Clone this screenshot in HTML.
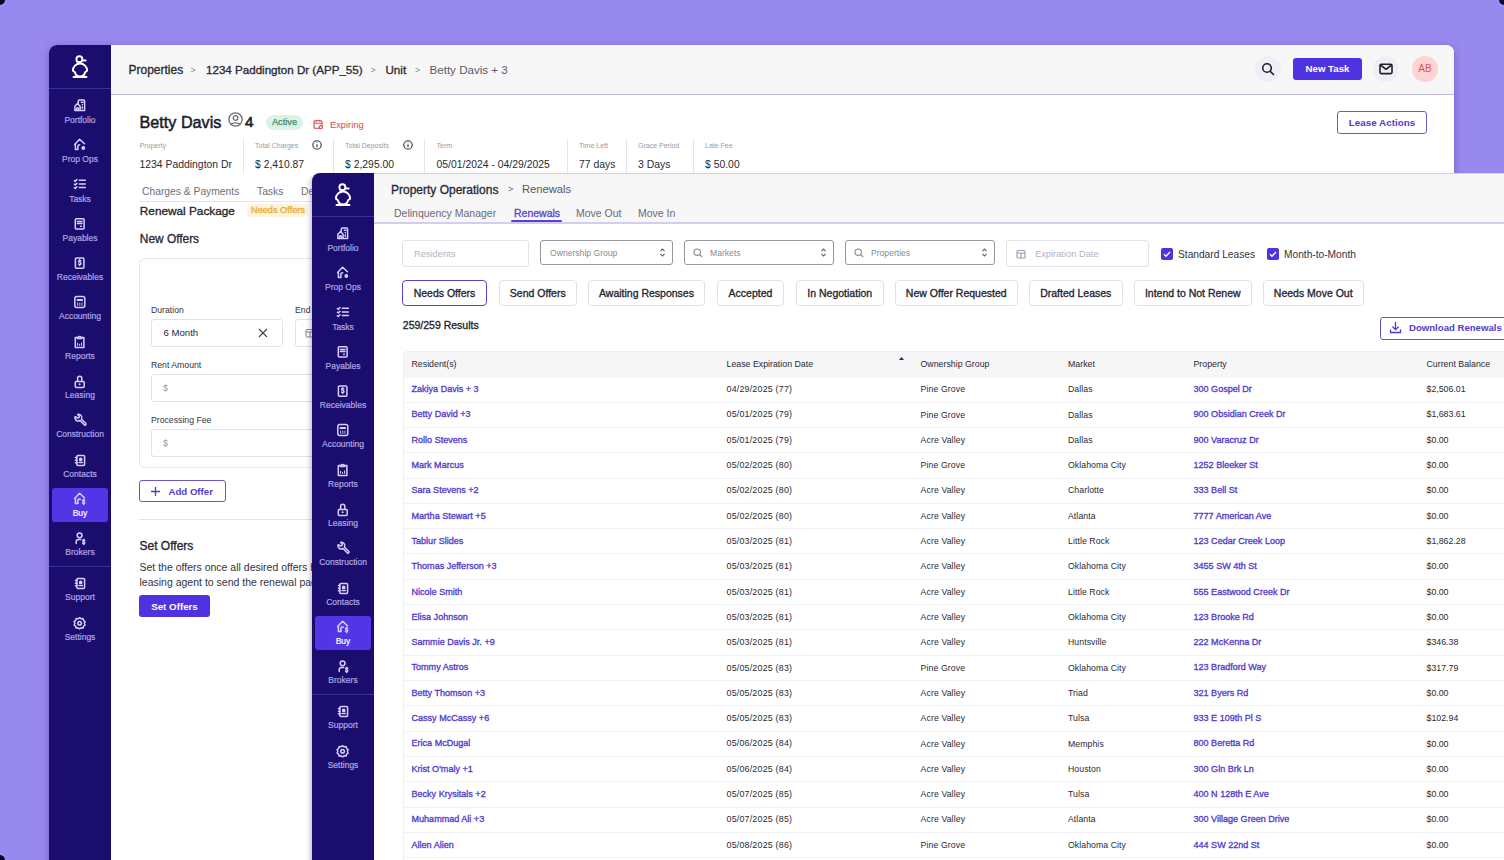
<!DOCTYPE html><html><head><meta charset="utf-8"><style>
*{box-sizing:border-box;margin:0;padding:0}
html,body{width:1504px;height:860px;overflow:hidden}
body{background:#9889ef;font-family:"Liberation Sans",sans-serif;position:relative}
.t{position:absolute;white-space:nowrap;line-height:1.2}
.sl{position:absolute;width:62px;text-align:center;font-size:8.5px;font-weight:400;line-height:10px;color:#aea6e4;-webkit-text-stroke:0.2px #aea6e4;white-space:nowrap}
</style></head><body>
<div style="position:absolute;left:-5px;top:-5px;width:10px;height:10px;border-radius:50%;background:#0a0630;box-shadow:0 0 2px 1px #a89cff"></div>
<div style="position:absolute;left:1499px;top:-5px;width:10px;height:10px;border-radius:50%;background:#0a0630;box-shadow:0 0 2px 1px #a89cff"></div>
<div style="position:absolute;left:-5px;top:855px;width:10px;height:10px;border-radius:50%;background:#0a0630;box-shadow:0 0 2px 1px #a89cff"></div>
<div style="position:absolute;left:49px;top:45px;width:1405px;height:830px;background:#fff;border-radius:8px 8px 0 0;overflow:hidden;box-shadow:0 2px 8px rgba(40,20,120,.35)">
</div>
<div style="position:absolute;left:111px;top:45px;width:1343px;height:49px;background:#f7f7f8;border-top-right-radius:8px;"></div>
<div style="position:absolute;left:111px;top:94px;width:1343px;height:1px;background:#c1bbdc;"></div>
<div style="position:absolute;left:49px;top:45px;width:62px;height:815px;background:#1b0d6e;border-top-left-radius:8px;"></div>
<svg style="position:absolute;left:66px;top:50px" width="28" height="32" viewBox="66 50 28 32" fill="none" stroke="#fff" stroke-width="1.9" stroke-linecap="round" stroke-linejoin="round"><circle cx="79.4" cy="59.3" r="3.0"/><path d="M82.3 60.4 L85.6 60.5"/><path d="M77.6 61.8 L78.3 63.6"/><path d="M72.9 70.6 A7.1 7.1 0 0 1 87.1 70.6"/><path d="M72.9 70.6 L74.9 72.3 A5.2 5.2 0 0 0 85.1 72.3 L87.1 70.6"/><path d="M73.5 77 H86.5"/></svg>
<div style="position:absolute;left:49px;top:88px;width:62px;height:1px;background:#3a2e9c;"></div>
<svg style="position:absolute;left:70px;top:95.8px" width="20" height="20" viewBox="0 0 20 20" fill="none" stroke="#d6d0ff" stroke-width="1.5" stroke-linecap="round" stroke-linejoin="round"><path d="M8.3 7.2V5a1 1 0 0 1 1-1h4.3a1 1 0 0 1 1 1v9.4H4.9V10.2L7.5 7.4l2.6 2.8v4.2"/><path d="M6.5 14.3v-1.6a1 1 0 0 1 2 0v1.6"/><path d="M11.4 6.3h1.6M12.3 8.6v.2M12.3 10.9v1.4"/></svg>
<div class="sl" style="left:49px;top:114.90px;">Portfolio</div>
<svg style="position:absolute;left:70px;top:135.1px" width="20" height="20" viewBox="0 0 20 20" fill="none" stroke="#d6d0ff" stroke-width="1.5" stroke-linecap="round" stroke-linejoin="round"><path d="M4.6 9.5L9.6 4.3l4.8 4.5"/><path d="M5.4 9.6v4.8h2.4"/><path d="M7.9 14.1v-2.6c0-1.2.8-1.8 1.8-1.8"/><circle cx="13.3" cy="13" r="1.9" fill="#d6d0ff" stroke="none"/></svg>
<div class="sl" style="left:49px;top:154.20px;">Prop Ops</div>
<svg style="position:absolute;left:70px;top:174.39999999999998px" width="20" height="20" viewBox="0 0 20 20" fill="none" stroke="#d6d0ff" stroke-width="1.5" stroke-linecap="round" stroke-linejoin="round"><path d="M9.3 6.3h6M9.3 9.9h6M9.3 13.5h6"/><path d="M4.4 6.6l.9.7 1.6-1.7M4.4 10.2l.9.7 1.6-1.7M4.4 13.8l.9.7 1.6-1.7"/></svg>
<div class="sl" style="left:49px;top:193.50px;">Tasks</div>
<svg style="position:absolute;left:70px;top:213.7px" width="20" height="20" viewBox="0 0 20 20" fill="none" stroke="#d6d0ff" stroke-width="1.5" stroke-linecap="round" stroke-linejoin="round"><rect x="5.3" y="4.8" width="8.8" height="10.2" rx="1"/><path d="M7.4 7.6h4.6M7.4 9.6h4.6"/><path d="M10.6 12.2h.8"/></svg>
<div class="sl" style="left:49px;top:232.80px;">Payables</div>
<svg style="position:absolute;left:70px;top:253.0px" width="20" height="20" viewBox="0 0 20 20" fill="none" stroke="#d6d0ff" stroke-width="1.5" stroke-linecap="round" stroke-linejoin="round"><rect x="5.4" y="5" width="8.5" height="10.2" rx="1"/><path d="M10.8 8c-.5-.6-2.2-.7-2.2.4 0 1.2 2.4.8 2.4 2.1 0 1.1-1.8 1.2-2.5.5M9.6 6.8v.7M9.6 11.9v.7"/></svg>
<div class="sl" style="left:49px;top:272.10px;">Receivables</div>
<svg style="position:absolute;left:70px;top:292.3px" width="20" height="20" viewBox="0 0 20 20" fill="none" stroke="#d6d0ff" stroke-width="1.5" stroke-linecap="round" stroke-linejoin="round"><rect x="4.8" y="4.5" width="10" height="11" rx="2"/><path d="M7.4 8h4.8" stroke-width="1.8"/><path d="M7.6 10.9v2.5M9.8 10.9v2.5M12 10.9v2.5" stroke-width=".9"/></svg>
<div class="sl" style="left:49px;top:311.40px;">Accounting</div>
<svg style="position:absolute;left:70px;top:331.59999999999997px" width="20" height="20" viewBox="0 0 20 20" fill="none" stroke="#d6d0ff" stroke-width="1.5" stroke-linecap="round" stroke-linejoin="round"><path d="M7.4 5.6H5.3v10h8.6v-10h-2.1"/><path d="M7.4 6.6c.3-1.6 1-2.2 2.2-2.2s1.9.6 2.2 2.2z"/><path d="M7.6 13.4v-2.2M9.6 13.4v-1.2M11.6 13.4v-2.6" stroke-width="1"/></svg>
<div class="sl" style="left:49px;top:350.70px;">Reports</div>
<svg style="position:absolute;left:70px;top:370.9px" width="20" height="20" viewBox="0 0 20 20" fill="none" stroke="#d6d0ff" stroke-width="1.5" stroke-linecap="round" stroke-linejoin="round"><rect x="5.3" y="10.4" width="8.9" height="6.2" rx="1"/><path d="M7.6 10.3V7.3a2.1 2.1 0 0 1 4.2 0v3"/><circle cx="9.6" cy="13.2" r="1" fill="#d6d0ff" stroke="none"/></svg>
<div class="sl" style="left:49px;top:390.00px;">Leasing</div>
<svg style="position:absolute;left:70px;top:410.2px" width="20" height="20" viewBox="0 0 20 20" fill="none" stroke="#d6d0ff" stroke-width="1.5" stroke-linecap="round" stroke-linejoin="round"><path d="M5.2 6.6a3.3 3.3 0 0 0 4.9 3.9l4.3 4.5a1.1 1.1 0 0 0 1.5-1.5l-4.4-4.3A3.3 3.3 0 0 0 7.7 4.5l1.6 1.7-.3 1.4-1.4.4z"/></svg>
<div class="sl" style="left:49px;top:429.30px;">Construction</div>
<svg style="position:absolute;left:70px;top:449.5px" width="20" height="20" viewBox="0 0 20 20" fill="none" stroke="#d6d0ff" stroke-width="1.5" stroke-linecap="round" stroke-linejoin="round"><rect x="6.8" y="5.4" width="7.8" height="10" rx="1.2"/><path d="M5.4 7.6h1.6M5.4 10.2h1.6M5.4 12.8h1.6"/><circle cx="10.7" cy="9.4" r="1.1" fill="#d6d0ff"/><path d="M9 12.6h3.4"/></svg>
<div class="sl" style="left:49px;top:468.60px;">Contacts</div>
<div style="position:absolute;left:51.5px;top:487.6px;width:56.3px;height:34px;background:#5236e6;border-radius:3px;"></div>
<svg style="position:absolute;left:70px;top:488.8px" width="20" height="20" viewBox="0 0 20 20" fill="none" stroke="#d6d0ff" stroke-width="1.5" stroke-linecap="round" stroke-linejoin="round"><path d="M4.6 9.5L9.6 4.3l4.8 4.5"/><path d="M5.4 9.6v4.8h2.6"/><path d="M10.4 10.3c-1.3-.6-2.6 0-2.6 1.6v2.4"/><path d="M14.6 11.3c-.4-.5-2-.6-2 .4 0 1.1 2.2.7 2.2 1.9 0 1-1.6 1.1-2.3.5M13.7 10.3v.6M13.7 14.9v.6"/></svg>
<div class="sl" style="left:49px;top:507.90px;color:#fff;-webkit-text-stroke:0.2px #fff;">Buy</div>
<svg style="position:absolute;left:70px;top:528.0999999999999px" width="20" height="20" viewBox="0 0 20 20" fill="none" stroke="#d6d0ff" stroke-width="1.5" stroke-linecap="round" stroke-linejoin="round"><circle cx="9.6" cy="7.3" r="2.4"/><path d="M6.2 15.6v-1.8c0-1.4.8-2.3 2.3-2.3h2.2"/><path d="M14.7 12.3c-.4-.5-2-.6-2 .4 0 1.1 2.2.7 2.2 1.9 0 1-1.6 1.1-2.3.5M13.8 11.3v.6M13.8 15.9v.6"/></svg>
<div class="sl" style="left:49px;top:547.20px;">Brokers</div>
<div style="position:absolute;left:49px;top:566.4px;width:62px;height:1px;background:#3a2e9c;"></div>
<svg style="position:absolute;left:70px;top:573.2px" width="20" height="20" viewBox="0 0 20 20" fill="none" stroke="#d6d0ff" stroke-width="1.5" stroke-linecap="round" stroke-linejoin="round"><rect x="6.8" y="5.4" width="7.8" height="10" rx="1.2"/><path d="M5.4 7.6h1.6M5.4 10.2h1.6M5.4 12.8h1.6"/><circle cx="10.7" cy="9.4" r="1.1" fill="#d6d0ff"/><path d="M9 12.6h3.4"/></svg>
<div class="sl" style="left:49px;top:592.10px;">Support</div>
<svg style="position:absolute;left:70px;top:612.8000000000001px" width="20" height="20" viewBox="0 0 20 20" fill="none" stroke="#d6d0ff" stroke-width="1.5" stroke-linecap="round" stroke-linejoin="round"><path d="M9.6 4.7l1.6 1.1 1.9-.2.5 1.8 1.5 1.2-.8 1.7.8 1.7-1.5 1.2-.5 1.8-1.9-.2-1.6 1.1-1.6-1.1-1.9.2-.5-1.8-1.5-1.2.8-1.7-.8-1.7 1.5-1.2.5-1.8 1.9.2z"/><circle cx="9.6" cy="10.3" r="1.8"/></svg>
<div class="sl" style="left:49px;top:631.70px;">Settings</div>
<div style="position:absolute;left:49px;top:45px;width:62px;height:20px;"></div>
<div class="t" style="left:128.5px;top:62.70px;font-size:12px;font-weight:400;-webkit-text-stroke:0.32px #2a2a35;color:#2a2a35;">Properties</div>
<div class="t" style="left:190.5px;top:64.85px;font-size:9px;font-weight:400;color:#8a8a94;">&gt;</div>
<div class="t" style="left:206px;top:62.92px;font-size:11.6px;font-weight:400;-webkit-text-stroke:0.32px #2a2a35;color:#2a2a35;">1234 Paddington Dr (APP_55)</div>
<div class="t" style="left:370.5px;top:64.85px;font-size:9px;font-weight:400;color:#8a8a94;">&gt;</div>
<div class="t" style="left:385.5px;top:62.92px;font-size:11.6px;font-weight:400;-webkit-text-stroke:0.32px #2a2a35;color:#2a2a35;">Unit</div>
<div class="t" style="left:415px;top:64.85px;font-size:9px;font-weight:400;color:#8a8a94;">&gt;</div>
<div class="t" style="left:429.5px;top:62.92px;font-size:11.6px;font-weight:400;color:#5a5a66;">Betty Davis + 3</div>
<div style="position:absolute;left:1255px;top:56px;width:26px;height:26px;border-radius:50%;background:#eeeef7"></div>
<svg style="position:absolute;left:1261px;top:62px" width="14" height="14" viewBox="0 0 14 14" fill="none" stroke="#1f1f2a" stroke-width="1.6" stroke-linecap="round"><circle cx="6" cy="6" r="4.3"/><path d="M9.2 9.2l3.3 3.3"/></svg>
<div style="position:absolute;left:1293px;top:58px;width:69px;height:22px;background:#4f33e3;border-radius:3px;"></div>
<div class="t" style="left:1293px;top:62.6px;width:69px;text-align:center;font-size:9.7px;font-weight:700;color:#fff">New Task</div>
<div style="position:absolute;left:1373px;top:56px;width:26px;height:26px;border-radius:50%;background:#eeeef7"></div>
<svg style="position:absolute;left:1379px;top:63px" width="14" height="12" viewBox="0 0 14 12" fill="none" stroke="#1f1f2a" stroke-width="1.6" stroke-linejoin="round"><rect x="1" y="1.2" width="12" height="9.4" rx="1.3"/><path d="M1.5 2l5.5 4.3L12.5 2"/></svg>
<div style="position:absolute;left:1412px;top:56px;width:26px;height:26px;border-radius:50%;background:#fdd3d3"></div>
<div class="t" style="left:1412px;top:63px;width:26px;text-align:center;font-size:10px;color:#d6555b">AB</div>
<div class="t" style="left:139.5px;top:113.29px;font-size:16.2px;font-weight:400;color:#1c1c2b;-webkit-text-stroke:0.5px #1c1c2b">Betty Davis</div>
<svg style="position:absolute;left:228px;top:112px" width="15" height="15" viewBox="0 0 15 15" fill="none" stroke="#6b6b78" stroke-width="1.3"><circle cx="7.5" cy="7.5" r="6.6"/><circle cx="7.5" cy="6" r="2.3"/><path d="M3.3 12.3c1-2 7.4-2 8.4 0"/></svg>
<div class="t" style="left:245px;top:113.24px;font-size:15.2px;font-weight:400;color:#1c1c2b;-webkit-text-stroke:0.6px #1c1c2b">4</div>
<div style="position:absolute;left:266px;top:115px;width:37px;height:15px;background:#dcf2e6;border-radius:8px;"></div>
<div class="t" style="left:266px;top:117.2px;width:37px;text-align:center;font-size:9.2px;color:#3d8a68;-webkit-text-stroke:0.25px #3d8a68">Active</div>
<svg style="position:absolute;left:313px;top:119px" width="11" height="11" viewBox="0 0 11 11" fill="none" stroke="#e0424a" stroke-width="1.1"><rect x="1" y="1.8" width="8" height="7.5" rx="1"/><path d="M1 4.3h8M3.2 .8v2M6.8 .8v2"/><circle cx="7.8" cy="8.2" r="1.6" fill="#fff"/></svg>
<div class="t" style="left:330px;top:119.89px;font-size:9.3px;font-weight:400;color:#e0424a;">Expiring</div>
<div style="position:absolute;left:1337px;top:111px;width:90px;height:23px;border:1px solid #6a5ec2;border-radius:3px;background:#fff;"></div>
<div class="t" style="left:1337px;top:117.2px;width:90px;text-align:center;font-size:9.85px;font-weight:700;color:#523bcc">Lease Actions</div>
<div class="t" style="left:139.5px;top:141.65px;font-size:7px;font-weight:400;color:#9b9aa5;">Property</div>
<div class="t" style="left:139.5px;top:159.48px;font-size:10.4px;font-weight:400;color:#2a2a33;">1234 Paddington Dr</div>
<div class="t" style="left:255px;top:141.65px;font-size:7px;font-weight:400;color:#9b9aa5;">Total Charges</div>
<div class="t" style="left:255px;top:159.48px;font-size:10.4px;font-weight:400;color:#2a2a33;">$ 2,410.87</div>
<div class="t" style="left:345px;top:141.65px;font-size:7px;font-weight:400;color:#9b9aa5;">Total Deposits</div>
<div class="t" style="left:345px;top:159.48px;font-size:10.4px;font-weight:400;color:#2a2a33;">$ 2,295.00</div>
<div class="t" style="left:436.5px;top:141.65px;font-size:7px;font-weight:400;color:#9b9aa5;">Term</div>
<div class="t" style="left:436.5px;top:159.48px;font-size:10.4px;font-weight:400;color:#2a2a33;">05/01/2024 - 04/29/2025</div>
<div class="t" style="left:579px;top:141.65px;font-size:7px;font-weight:400;color:#9b9aa5;">Time Left</div>
<div class="t" style="left:579px;top:159.48px;font-size:10.4px;font-weight:400;color:#2a2a33;">77 days</div>
<div class="t" style="left:638px;top:141.65px;font-size:7px;font-weight:400;color:#9b9aa5;">Grace Period</div>
<div class="t" style="left:638px;top:159.48px;font-size:10.4px;font-weight:400;color:#2a2a33;">3 Days</div>
<div class="t" style="left:705px;top:141.65px;font-size:7px;font-weight:400;color:#9b9aa5;">Late Fee</div>
<div class="t" style="left:705px;top:159.48px;font-size:10.4px;font-weight:400;color:#2a2a33;">$ 50.00</div>
<div style="position:absolute;left:243.3px;top:139px;width:1px;height:34px;background:#e4e4ea;"></div>
<div style="position:absolute;left:333.4px;top:139px;width:1px;height:34px;background:#e4e4ea;"></div>
<div style="position:absolute;left:424.3px;top:139px;width:1px;height:34px;background:#e4e4ea;"></div>
<div style="position:absolute;left:567px;top:139px;width:1px;height:34px;background:#e4e4ea;"></div>
<div style="position:absolute;left:625.7px;top:139px;width:1px;height:34px;background:#e4e4ea;"></div>
<div style="position:absolute;left:692.9px;top:139px;width:1px;height:34px;background:#e4e4ea;"></div>
<svg style="position:absolute;left:311.5px;top:140px" width="10" height="10" viewBox="0 0 10 10" fill="none" stroke="#333" stroke-width="1.1"><circle cx="5" cy="5" r="4.2"/><path d="M5 4.3v3M5 2.6v.3"/></svg>
<svg style="position:absolute;left:402.5px;top:140px" width="10" height="10" viewBox="0 0 10 10" fill="none" stroke="#333" stroke-width="1.1"><circle cx="5" cy="5" r="4.2"/><path d="M5 4.3v3M5 2.6v.3"/></svg>
<div class="t" style="left:142px;top:185.84px;font-size:10.3px;font-weight:400;color:#6f6f7a;">Charges &amp; Payments</div>
<div class="t" style="left:257px;top:185.84px;font-size:10.3px;font-weight:400;color:#6f6f7a;">Tasks</div>
<div class="t" style="left:301px;top:185.84px;font-size:10.3px;font-weight:400;color:#6f6f7a;">Deposits</div>
<div style="position:absolute;left:139px;top:200.5px;width:200px;height:1px;background:#e3e3ea;"></div>
<div class="t" style="left:139.8px;top:203.61px;font-size:11.8px;font-weight:400;-webkit-text-stroke:0.32px #24242f;color:#24242f;">Renewal Package</div>
<div style="position:absolute;left:247px;top:203.5px;width:61px;height:13.5px;background:#fff4d9;border-radius:3px;"></div>
<div class="t" style="left:251px;top:205.04px;font-size:9.2px;font-weight:400;-webkit-text-stroke:0.32px #e6ad3f;color:#e6ad3f;">Needs Offers</div>
<div class="t" style="left:139.8px;top:231.56px;font-size:11.9px;font-weight:400;-webkit-text-stroke:0.32px #2a2a35;color:#2a2a35;">New Offers</div>
<div style="position:absolute;left:139px;top:258px;width:200px;height:210px;border:1px solid #e6e6ec;border-radius:6px;"></div>
<div class="t" style="left:151px;top:304.71px;font-size:8.7px;font-weight:400;color:#333340;">Duration</div>
<div style="position:absolute;left:151px;top:319px;width:132px;height:28px;border:1px solid #e1e1e8;border-radius:3px;"></div>
<div class="t" style="left:163.5px;top:327.02px;font-size:9.6px;font-weight:400;color:#2a2a33;">6 Month</div>
<svg style="position:absolute;left:258px;top:328px" width="10" height="10" viewBox="0 0 10 10" stroke="#444" stroke-width="1.1"><path d="M1 1l8 8M9 1l-8 8"/></svg>
<div class="t" style="left:295px;top:304.71px;font-size:8.7px;font-weight:400;color:#333340;">End</div>
<div style="position:absolute;left:295px;top:319px;width:40px;height:28px;border:1px solid #e1e1e8;border-radius:3px;"></div>
<svg style="position:absolute;left:305px;top:328px" width="10" height="10" viewBox="0 0 10 10" fill="none" stroke="#888" stroke-width="1"><rect x="1" y="1.5" width="8" height="7.5" rx="1"/><path d="M1 4h8M5 4v5"/></svg>
<div class="t" style="left:151px;top:359.51px;font-size:8.7px;font-weight:400;color:#333340;">Rent Amount</div>
<div style="position:absolute;left:151px;top:374px;width:190px;height:28px;border:1px solid #e1e1e8;border-radius:3px;"></div>
<div class="t" style="left:163px;top:382.75px;font-size:9px;font-weight:400;color:#9a9aa5;">$</div>
<div class="t" style="left:151px;top:414.61px;font-size:8.7px;font-weight:400;color:#333340;">Processing Fee</div>
<div style="position:absolute;left:151px;top:429px;width:190px;height:28px;border:1px solid #e1e1e8;border-radius:3px;"></div>
<div class="t" style="left:163px;top:437.75px;font-size:9px;font-weight:400;color:#9a9aa5;">$</div>
<div style="position:absolute;left:139px;top:480px;width:87px;height:22px;border:1px solid #6a55d0;border-radius:3px;"></div>
<svg style="position:absolute;left:150px;top:485.5px" width="11" height="11" viewBox="0 0 11 11" stroke="#523bcc" stroke-width="1.3"><path d="M5.5 1v9M1 5.5h9"/></svg>
<div class="t" style="left:168.5px;top:485.89px;font-size:9.65px;font-weight:700;color:#523bcc;">Add Offer</div>
<div style="position:absolute;left:139px;top:519px;width:200px;height:1px;background:#e3e3ea;"></div>
<div class="t" style="left:139.5px;top:539.00px;font-size:12px;font-weight:400;-webkit-text-stroke:0.32px #24242f;color:#24242f;">Set Offers</div>
<div class="t" style="left:139.5px;top:560.73px;font-size:10.5px;font-weight:400;color:#33333d;">Set the offers once all desired offers have been added to allow the</div>
<div class="t" style="left:139.5px;top:575.83px;font-size:10.5px;font-weight:400;color:#33333d;">leasing agent to send the renewal package</div>
<div style="position:absolute;left:139px;top:595px;width:71px;height:22px;background:#4f33e3;border-radius:3px;"></div>
<div class="t" style="left:139px;top:600.6px;width:71px;text-align:center;font-size:9.75px;font-weight:700;color:#fff">Set Offers</div>
<div style="position:absolute;left:312px;top:173px;width:1250px;height:720px;background:#fff;border-radius:8px 0 0 0;box-shadow:-3px 2px 4px -1px rgba(30,20,60,.26)"></div>
<div style="position:absolute;left:374px;top:173px;width:1130px;height:49px;background:#f7f7f7;"></div>
<div style="position:absolute;left:374px;top:172.5px;width:1130px;height:1.6px;background:#d3cdef;"></div>
<div style="position:absolute;left:374px;top:222px;width:1130px;height:1.6px;background:#d3cdef;"></div>
<div style="position:absolute;left:312px;top:173px;width:62px;height:687px;background:#1b0d6e;border-top-left-radius:8px;"></div>
<svg style="position:absolute;left:329px;top:178px" width="28" height="32" viewBox="66 50 28 32" fill="none" stroke="#fff" stroke-width="1.9" stroke-linecap="round" stroke-linejoin="round"><circle cx="79.4" cy="59.3" r="3.0"/><path d="M82.3 60.4 L85.6 60.5"/><path d="M77.6 61.8 L78.3 63.6"/><path d="M72.9 70.6 A7.1 7.1 0 0 1 87.1 70.6"/><path d="M72.9 70.6 L74.9 72.3 A5.2 5.2 0 0 0 85.1 72.3 L87.1 70.6"/><path d="M73.5 77 H86.5"/></svg>
<div style="position:absolute;left:312px;top:216px;width:62px;height:1px;background:#3a2e9c;"></div>
<svg style="position:absolute;left:333px;top:223.8px" width="20" height="20" viewBox="0 0 20 20" fill="none" stroke="#d6d0ff" stroke-width="1.5" stroke-linecap="round" stroke-linejoin="round"><path d="M8.3 7.2V5a1 1 0 0 1 1-1h4.3a1 1 0 0 1 1 1v9.4H4.9V10.2L7.5 7.4l2.6 2.8v4.2"/><path d="M6.5 14.3v-1.6a1 1 0 0 1 2 0v1.6"/><path d="M11.4 6.3h1.6M12.3 8.6v.2M12.3 10.9v1.4"/></svg>
<div class="sl" style="left:312px;top:242.90px;">Portfolio</div>
<svg style="position:absolute;left:333px;top:263.1px" width="20" height="20" viewBox="0 0 20 20" fill="none" stroke="#d6d0ff" stroke-width="1.5" stroke-linecap="round" stroke-linejoin="round"><path d="M4.6 9.5L9.6 4.3l4.8 4.5"/><path d="M5.4 9.6v4.8h2.4"/><path d="M7.9 14.1v-2.6c0-1.2.8-1.8 1.8-1.8"/><circle cx="13.3" cy="13" r="1.9" fill="#d6d0ff" stroke="none"/></svg>
<div class="sl" style="left:312px;top:282.20px;">Prop Ops</div>
<svg style="position:absolute;left:333px;top:302.4px" width="20" height="20" viewBox="0 0 20 20" fill="none" stroke="#d6d0ff" stroke-width="1.5" stroke-linecap="round" stroke-linejoin="round"><path d="M9.3 6.3h6M9.3 9.9h6M9.3 13.5h6"/><path d="M4.4 6.6l.9.7 1.6-1.7M4.4 10.2l.9.7 1.6-1.7M4.4 13.8l.9.7 1.6-1.7"/></svg>
<div class="sl" style="left:312px;top:321.50px;">Tasks</div>
<svg style="position:absolute;left:333px;top:341.7px" width="20" height="20" viewBox="0 0 20 20" fill="none" stroke="#d6d0ff" stroke-width="1.5" stroke-linecap="round" stroke-linejoin="round"><rect x="5.3" y="4.8" width="8.8" height="10.2" rx="1"/><path d="M7.4 7.6h4.6M7.4 9.6h4.6"/><path d="M10.6 12.2h.8"/></svg>
<div class="sl" style="left:312px;top:360.80px;">Payables</div>
<svg style="position:absolute;left:333px;top:381.0px" width="20" height="20" viewBox="0 0 20 20" fill="none" stroke="#d6d0ff" stroke-width="1.5" stroke-linecap="round" stroke-linejoin="round"><rect x="5.4" y="5" width="8.5" height="10.2" rx="1"/><path d="M10.8 8c-.5-.6-2.2-.7-2.2.4 0 1.2 2.4.8 2.4 2.1 0 1.1-1.8 1.2-2.5.5M9.6 6.8v.7M9.6 11.9v.7"/></svg>
<div class="sl" style="left:312px;top:400.10px;">Receivables</div>
<svg style="position:absolute;left:333px;top:420.3px" width="20" height="20" viewBox="0 0 20 20" fill="none" stroke="#d6d0ff" stroke-width="1.5" stroke-linecap="round" stroke-linejoin="round"><rect x="4.8" y="4.5" width="10" height="11" rx="2"/><path d="M7.4 8h4.8" stroke-width="1.8"/><path d="M7.6 10.9v2.5M9.8 10.9v2.5M12 10.9v2.5" stroke-width=".9"/></svg>
<div class="sl" style="left:312px;top:439.40px;">Accounting</div>
<svg style="position:absolute;left:333px;top:459.6px" width="20" height="20" viewBox="0 0 20 20" fill="none" stroke="#d6d0ff" stroke-width="1.5" stroke-linecap="round" stroke-linejoin="round"><path d="M7.4 5.6H5.3v10h8.6v-10h-2.1"/><path d="M7.4 6.6c.3-1.6 1-2.2 2.2-2.2s1.9.6 2.2 2.2z"/><path d="M7.6 13.4v-2.2M9.6 13.4v-1.2M11.6 13.4v-2.6" stroke-width="1"/></svg>
<div class="sl" style="left:312px;top:478.70px;">Reports</div>
<svg style="position:absolute;left:333px;top:498.9px" width="20" height="20" viewBox="0 0 20 20" fill="none" stroke="#d6d0ff" stroke-width="1.5" stroke-linecap="round" stroke-linejoin="round"><rect x="5.3" y="10.4" width="8.9" height="6.2" rx="1"/><path d="M7.6 10.3V7.3a2.1 2.1 0 0 1 4.2 0v3"/><circle cx="9.6" cy="13.2" r="1" fill="#d6d0ff" stroke="none"/></svg>
<div class="sl" style="left:312px;top:518.00px;">Leasing</div>
<svg style="position:absolute;left:333px;top:538.2px" width="20" height="20" viewBox="0 0 20 20" fill="none" stroke="#d6d0ff" stroke-width="1.5" stroke-linecap="round" stroke-linejoin="round"><path d="M5.2 6.6a3.3 3.3 0 0 0 4.9 3.9l4.3 4.5a1.1 1.1 0 0 0 1.5-1.5l-4.4-4.3A3.3 3.3 0 0 0 7.7 4.5l1.6 1.7-.3 1.4-1.4.4z"/></svg>
<div class="sl" style="left:312px;top:557.30px;">Construction</div>
<svg style="position:absolute;left:333px;top:577.5px" width="20" height="20" viewBox="0 0 20 20" fill="none" stroke="#d6d0ff" stroke-width="1.5" stroke-linecap="round" stroke-linejoin="round"><rect x="6.8" y="5.4" width="7.8" height="10" rx="1.2"/><path d="M5.4 7.6h1.6M5.4 10.2h1.6M5.4 12.8h1.6"/><circle cx="10.7" cy="9.4" r="1.1" fill="#d6d0ff"/><path d="M9 12.6h3.4"/></svg>
<div class="sl" style="left:312px;top:596.60px;">Contacts</div>
<div style="position:absolute;left:314.5px;top:615.5999999999999px;width:56.3px;height:34px;background:#5236e6;border-radius:3px;"></div>
<svg style="position:absolute;left:333px;top:616.8px" width="20" height="20" viewBox="0 0 20 20" fill="none" stroke="#d6d0ff" stroke-width="1.5" stroke-linecap="round" stroke-linejoin="round"><path d="M4.6 9.5L9.6 4.3l4.8 4.5"/><path d="M5.4 9.6v4.8h2.6"/><path d="M10.4 10.3c-1.3-.6-2.6 0-2.6 1.6v2.4"/><path d="M14.6 11.3c-.4-.5-2-.6-2 .4 0 1.1 2.2.7 2.2 1.9 0 1-1.6 1.1-2.3.5M13.7 10.3v.6M13.7 14.9v.6"/></svg>
<div class="sl" style="left:312px;top:635.90px;color:#fff;-webkit-text-stroke:0.2px #fff;">Buy</div>
<svg style="position:absolute;left:333px;top:656.0999999999999px" width="20" height="20" viewBox="0 0 20 20" fill="none" stroke="#d6d0ff" stroke-width="1.5" stroke-linecap="round" stroke-linejoin="round"><circle cx="9.6" cy="7.3" r="2.4"/><path d="M6.2 15.6v-1.8c0-1.4.8-2.3 2.3-2.3h2.2"/><path d="M14.7 12.3c-.4-.5-2-.6-2 .4 0 1.1 2.2.7 2.2 1.9 0 1-1.6 1.1-2.3.5M13.8 11.3v.6M13.8 15.9v.6"/></svg>
<div class="sl" style="left:312px;top:675.20px;">Brokers</div>
<div style="position:absolute;left:312px;top:694.4px;width:62px;height:1px;background:#3a2e9c;"></div>
<svg style="position:absolute;left:333px;top:701.2px" width="20" height="20" viewBox="0 0 20 20" fill="none" stroke="#d6d0ff" stroke-width="1.5" stroke-linecap="round" stroke-linejoin="round"><rect x="6.8" y="5.4" width="7.8" height="10" rx="1.2"/><path d="M5.4 7.6h1.6M5.4 10.2h1.6M5.4 12.8h1.6"/><circle cx="10.7" cy="9.4" r="1.1" fill="#d6d0ff"/><path d="M9 12.6h3.4"/></svg>
<div class="sl" style="left:312px;top:720.10px;">Support</div>
<svg style="position:absolute;left:333px;top:740.8000000000001px" width="20" height="20" viewBox="0 0 20 20" fill="none" stroke="#d6d0ff" stroke-width="1.5" stroke-linecap="round" stroke-linejoin="round"><path d="M9.6 4.7l1.6 1.1 1.9-.2.5 1.8 1.5 1.2-.8 1.7.8 1.7-1.5 1.2-.5 1.8-1.9-.2-1.6 1.1-1.6-1.1-1.9.2-.5-1.8-1.5-1.2.8-1.7-.8-1.7 1.5-1.2.5-1.8 1.9.2z"/><circle cx="9.6" cy="10.3" r="1.8"/></svg>
<div class="sl" style="left:312px;top:759.70px;">Settings</div>
<div class="t" style="left:391px;top:182.70px;font-size:12px;font-weight:400;-webkit-text-stroke:0.32px #2a2a35;color:#2a2a35;">Property Operations</div>
<div class="t" style="left:508px;top:184.35px;font-size:9px;font-weight:400;color:#666;">&gt;</div>
<div class="t" style="left:522px;top:183.14px;font-size:11.2px;font-weight:400;color:#55555f;">Renewals</div>
<div class="t" style="left:394px;top:207.22px;font-size:10.5px;font-weight:400;color:#6a6a75;">Delinquency Manager</div>
<div class="t" style="left:514px;top:207.22px;font-size:10.5px;font-weight:400;-webkit-text-stroke:0.32px #5a46d0;color:#5a46d0;">Renewals</div>
<div style="position:absolute;left:511px;top:219.5px;width:51px;height:2.5px;background:#5a3fd1;border-radius:1px;"></div>
<div class="t" style="left:576px;top:207.22px;font-size:10.5px;font-weight:400;color:#6a6a75;">Move Out</div>
<div class="t" style="left:638px;top:207.22px;font-size:10.5px;font-weight:400;color:#6a6a75;">Move In</div>
<div style="position:absolute;left:402px;top:240.2px;width:127px;height:27px;border:1px solid #e3e3ea;border-radius:3px;"></div>
<div class="t" style="left:414px;top:248.88px;font-size:9.3px;font-weight:400;color:#b4b4bf;">Residents</div>
<div style="position:absolute;left:540px;top:240px;width:133px;height:25px;border:1px solid #96969e;border-radius:3px;"></div>
<div class="t" style="left:550px;top:248.27px;font-size:8.6px;font-weight:400;color:#8a8a95;">Ownership Group</div>
<svg style="position:absolute;left:659px;top:247px" width="7" height="11" viewBox="0 0 7 11" fill="none" stroke="#666" stroke-width="1.1"><path d="M1.5 4l2-2 2 2M1.5 7l2 2 2-2"/></svg>
<div style="position:absolute;left:684px;top:240px;width:150px;height:25px;border:1px solid #96969e;border-radius:3px;"></div>
<svg style="position:absolute;left:693px;top:248px" width="10" height="10" viewBox="0 0 10 10" fill="none" stroke="#888" stroke-width="1.1"><circle cx="4.2" cy="4.2" r="3.2"/><path d="M6.6 6.6l2.6 2.6"/></svg>
<div class="t" style="left:710px;top:248.27px;font-size:8.6px;font-weight:400;color:#8a8a95;">Markets</div>
<svg style="position:absolute;left:820px;top:247px" width="7" height="11" viewBox="0 0 7 11" fill="none" stroke="#666" stroke-width="1.1"><path d="M1.5 4l2-2 2 2M1.5 7l2 2 2-2"/></svg>
<div style="position:absolute;left:845px;top:240px;width:150px;height:25px;border:1px solid #96969e;border-radius:3px;"></div>
<svg style="position:absolute;left:854px;top:248px" width="10" height="10" viewBox="0 0 10 10" fill="none" stroke="#888" stroke-width="1.1"><circle cx="4.2" cy="4.2" r="3.2"/><path d="M6.6 6.6l2.6 2.6"/></svg>
<div class="t" style="left:871px;top:248.27px;font-size:8.6px;font-weight:400;color:#8a8a95;">Properties</div>
<svg style="position:absolute;left:981px;top:247px" width="7" height="11" viewBox="0 0 7 11" fill="none" stroke="#666" stroke-width="1.1"><path d="M1.5 4l2-2 2 2M1.5 7l2 2 2-2"/></svg>
<div style="position:absolute;left:1006px;top:240.2px;width:143px;height:27px;border:1px solid #e3e3ea;border-radius:3px;"></div>
<svg style="position:absolute;left:1016px;top:249px" width="10" height="10" viewBox="0 0 10 10" fill="none" stroke="#9a98b0" stroke-width="1.1"><rect x="1" y="1.5" width="8" height="7.5" rx="1"/><path d="M1 4h8M5 4v5"/></svg>
<div class="t" style="left:1035px;top:248.88px;font-size:9.3px;font-weight:400;color:#b4b4bf;">Expiration Date</div>
<div style="position:absolute;left:1161px;top:248px;width:11.5px;height:11.5px;background:#4f33e3;border-radius:2px;"></div>
<svg style="position:absolute;left:1161px;top:248px" width="12" height="12" viewBox="0 0 12 12" fill="none" stroke="#fff" stroke-width="1.4"><path d="M3 6.2l2 2 4-4.2"/></svg>
<div class="t" style="left:1178px;top:249.19px;font-size:10.2px;font-weight:400;color:#33333d;">Standard Leases</div>
<div style="position:absolute;left:1267px;top:248px;width:11.5px;height:11.5px;background:#4f33e3;border-radius:2px;"></div>
<svg style="position:absolute;left:1267px;top:248px" width="12" height="12" viewBox="0 0 12 12" fill="none" stroke="#fff" stroke-width="1.4"><path d="M3 6.2l2 2 4-4.2"/></svg>
<div class="t" style="left:1284px;top:249.19px;font-size:10.2px;font-weight:400;color:#33333d;">Month-to-Month</div>
<div style="position:absolute;left:402px;top:280px;width:85px;height:25.5px;border:1.5px solid #5a43d3;border-radius:4px;background:#fff;"></div>
<div class="t" style="left:402px;top:286.5px;width:85px;text-align:center;font-size:10.5px;font-weight:400;-webkit-text-stroke:0.32px #25252f;color:#25252f">Needs Offers</div>
<div style="position:absolute;left:499px;top:280px;width:77.5px;height:25.5px;border:1px solid #e1e1e8;border-radius:4px;background:#fff;"></div>
<div class="t" style="left:499px;top:286.5px;width:77.5px;text-align:center;font-size:10.5px;font-weight:400;-webkit-text-stroke:0.32px #25252f;color:#25252f">Send Offers</div>
<div style="position:absolute;left:588px;top:280px;width:117px;height:25.5px;border:1px solid #e1e1e8;border-radius:4px;background:#fff;"></div>
<div class="t" style="left:588px;top:286.5px;width:117px;text-align:center;font-size:10.5px;font-weight:400;-webkit-text-stroke:0.32px #25252f;color:#25252f">Awaiting Responses</div>
<div style="position:absolute;left:717px;top:280px;width:67px;height:25.5px;border:1px solid #e1e1e8;border-radius:4px;background:#fff;"></div>
<div class="t" style="left:717px;top:286.5px;width:67px;text-align:center;font-size:10.5px;font-weight:400;-webkit-text-stroke:0.32px #25252f;color:#25252f">Accepted</div>
<div style="position:absolute;left:796px;top:280px;width:87.5px;height:25.5px;border:1px solid #e1e1e8;border-radius:4px;background:#fff;"></div>
<div class="t" style="left:796px;top:286.5px;width:87.5px;text-align:center;font-size:10.5px;font-weight:400;-webkit-text-stroke:0.32px #25252f;color:#25252f">In Negotiation</div>
<div style="position:absolute;left:895px;top:280px;width:122.5px;height:25.5px;border:1px solid #e1e1e8;border-radius:4px;background:#fff;"></div>
<div class="t" style="left:895px;top:286.5px;width:122.5px;text-align:center;font-size:10.5px;font-weight:400;-webkit-text-stroke:0.32px #25252f;color:#25252f">New Offer Requested</div>
<div style="position:absolute;left:1029px;top:280px;width:93.5px;height:25.5px;border:1px solid #e1e1e8;border-radius:4px;background:#fff;"></div>
<div class="t" style="left:1029px;top:286.5px;width:93.5px;text-align:center;font-size:10.5px;font-weight:400;-webkit-text-stroke:0.32px #25252f;color:#25252f">Drafted Leases</div>
<div style="position:absolute;left:1134px;top:280px;width:117.5px;height:25.5px;border:1px solid #e1e1e8;border-radius:4px;background:#fff;"></div>
<div class="t" style="left:1134px;top:286.5px;width:117.5px;text-align:center;font-size:10.5px;font-weight:400;-webkit-text-stroke:0.32px #25252f;color:#25252f">Intend to Not Renew</div>
<div style="position:absolute;left:1263px;top:280px;width:100.5px;height:25.5px;border:1px solid #e1e1e8;border-radius:4px;background:#fff;"></div>
<div class="t" style="left:1263px;top:286.5px;width:100.5px;text-align:center;font-size:10.5px;font-weight:400;-webkit-text-stroke:0.32px #25252f;color:#25252f">Needs Move Out</div>
<div class="t" style="left:402.8px;top:318.73px;font-size:10.5px;font-weight:400;-webkit-text-stroke:0.32px #22222c;color:#22222c;">259/259 Results</div>
<div style="position:absolute;left:1380px;top:317px;width:140px;height:22.5px;border:1px solid #6a55d0;border-radius:3px;"></div>
<svg style="position:absolute;left:1389px;top:321px" width="13" height="13" viewBox="0 0 13 13" fill="none" stroke="#523bcc" stroke-width="1.3" stroke-linecap="round"><path d="M6.5 1.5v7M3.8 6l2.7 2.7L9.2 6M1.5 9v2.5h10V9"/></svg>
<div class="t" style="left:1409px;top:322.42px;font-size:9.6px;font-weight:700;color:#523bcc;">Download Renewals</div>
<div style="position:absolute;left:403px;top:351px;width:1110px;height:520px;border:1px solid #f0f0f3;border-radius:4px;"></div>
<div style="position:absolute;left:404px;top:352px;width:1110px;height:25.5px;background:#f6f6f7;"></div>
<div class="t" style="left:411.5px;top:359.16px;font-size:8.8px;font-weight:400;color:#2a2a36;">Resident(s)</div>
<div class="t" style="left:726.5px;top:359.16px;font-size:8.8px;font-weight:400;color:#2a2a36;">Lease Expiration Date</div>
<div class="t" style="left:920.5px;top:359.16px;font-size:8.8px;font-weight:400;color:#2a2a36;">Ownership Group</div>
<div class="t" style="left:1068px;top:359.16px;font-size:8.8px;font-weight:400;color:#2a2a36;">Market</div>
<div class="t" style="left:1193.5px;top:359.16px;font-size:8.8px;font-weight:400;color:#2a2a36;">Property</div>
<div class="t" style="left:1426.5px;top:359.16px;font-size:8.8px;font-weight:400;color:#2a2a36;">Current Balance</div>
<svg style="position:absolute;left:898px;top:356px" width="7" height="5" viewBox="0 0 7 5"><path d="M1 4l2.5-3L6 4z" fill="#2a2080"/></svg>
<div style="position:absolute;left:404px;top:401.6px;width:1110px;height:1px;background:#f1f1f4;"></div>
<div class="t" style="left:411.5px;top:384.02px;font-size:9.05px;font-weight:400;-webkit-text-stroke:0.32px #523bcc;color:#523bcc;">Zakiya Davis + 3</div>
<div class="t" style="left:726.5px;top:384.11px;font-size:8.9px;font-weight:400;color:#2a2a32;letter-spacing:0.2px">04/29/2025 (77)</div>
<div class="t" style="left:920.5px;top:384.21px;font-size:8.7px;font-weight:400;color:#2a2a32;letter-spacing:0.12px">Pine Grove</div>
<div class="t" style="left:1068px;top:384.21px;font-size:8.7px;font-weight:400;color:#2a2a32;letter-spacing:0.08px">Dallas</div>
<div class="t" style="left:1193.5px;top:384.02px;font-size:9.05px;font-weight:400;-webkit-text-stroke:0.32px #523bcc;color:#523bcc;">300 Gospel Dr</div>
<div class="t" style="left:1426.5px;top:384.16px;font-size:8.8px;font-weight:400;color:#2a2a32;">$2,506.01</div>
<div style="position:absolute;left:404px;top:426.91px;width:1110px;height:1px;background:#f1f1f4;"></div>
<div class="t" style="left:411.5px;top:409.33px;font-size:9.05px;font-weight:400;-webkit-text-stroke:0.32px #523bcc;color:#523bcc;">Betty David +3</div>
<div class="t" style="left:726.5px;top:409.42px;font-size:8.9px;font-weight:400;color:#2a2a32;letter-spacing:0.2px">05/01/2025 (79)</div>
<div class="t" style="left:920.5px;top:409.52px;font-size:8.7px;font-weight:400;color:#2a2a32;letter-spacing:0.12px">Pine Grove</div>
<div class="t" style="left:1068px;top:409.52px;font-size:8.7px;font-weight:400;color:#2a2a32;letter-spacing:0.08px">Dallas</div>
<div class="t" style="left:1193.5px;top:409.33px;font-size:9.05px;font-weight:400;-webkit-text-stroke:0.32px #523bcc;color:#523bcc;">900 Obsidian Creek Dr</div>
<div class="t" style="left:1426.5px;top:409.47px;font-size:8.8px;font-weight:400;color:#2a2a32;">$1,683.61</div>
<div style="position:absolute;left:404px;top:452.22px;width:1110px;height:1px;background:#f1f1f4;"></div>
<div class="t" style="left:411.5px;top:434.64px;font-size:9.05px;font-weight:400;-webkit-text-stroke:0.32px #523bcc;color:#523bcc;">Rollo Stevens</div>
<div class="t" style="left:726.5px;top:434.73px;font-size:8.9px;font-weight:400;color:#2a2a32;letter-spacing:0.2px">05/01/2025 (79)</div>
<div class="t" style="left:920.5px;top:434.83px;font-size:8.7px;font-weight:400;color:#2a2a32;letter-spacing:0.12px">Acre Valley</div>
<div class="t" style="left:1068px;top:434.83px;font-size:8.7px;font-weight:400;color:#2a2a32;letter-spacing:0.08px">Dallas</div>
<div class="t" style="left:1193.5px;top:434.64px;font-size:9.05px;font-weight:400;-webkit-text-stroke:0.32px #523bcc;color:#523bcc;">900 Varacruz Dr</div>
<div class="t" style="left:1426.5px;top:434.78px;font-size:8.8px;font-weight:400;color:#2a2a32;">$0.00</div>
<div style="position:absolute;left:404px;top:477.53000000000003px;width:1110px;height:1px;background:#f1f1f4;"></div>
<div class="t" style="left:411.5px;top:459.95px;font-size:9.05px;font-weight:400;-webkit-text-stroke:0.32px #523bcc;color:#523bcc;">Mark Marcus</div>
<div class="t" style="left:726.5px;top:460.04px;font-size:8.9px;font-weight:400;color:#2a2a32;letter-spacing:0.2px">05/02/2025 (80)</div>
<div class="t" style="left:920.5px;top:460.14px;font-size:8.7px;font-weight:400;color:#2a2a32;letter-spacing:0.12px">Pine Grove</div>
<div class="t" style="left:1068px;top:460.14px;font-size:8.7px;font-weight:400;color:#2a2a32;letter-spacing:0.08px">Oklahoma City</div>
<div class="t" style="left:1193.5px;top:459.95px;font-size:9.05px;font-weight:400;-webkit-text-stroke:0.32px #523bcc;color:#523bcc;">1252 Bleeker St</div>
<div class="t" style="left:1426.5px;top:460.09px;font-size:8.8px;font-weight:400;color:#2a2a32;">$0.00</div>
<div style="position:absolute;left:404px;top:502.84000000000003px;width:1110px;height:1px;background:#f1f1f4;"></div>
<div class="t" style="left:411.5px;top:485.26px;font-size:9.05px;font-weight:400;-webkit-text-stroke:0.32px #523bcc;color:#523bcc;">Sara Stevens +2</div>
<div class="t" style="left:726.5px;top:485.35px;font-size:8.9px;font-weight:400;color:#2a2a32;letter-spacing:0.2px">05/02/2025 (80)</div>
<div class="t" style="left:920.5px;top:485.45px;font-size:8.7px;font-weight:400;color:#2a2a32;letter-spacing:0.12px">Acre Valley</div>
<div class="t" style="left:1068px;top:485.45px;font-size:8.7px;font-weight:400;color:#2a2a32;letter-spacing:0.08px">Charlotte</div>
<div class="t" style="left:1193.5px;top:485.26px;font-size:9.05px;font-weight:400;-webkit-text-stroke:0.32px #523bcc;color:#523bcc;">333 Bell St</div>
<div class="t" style="left:1426.5px;top:485.40px;font-size:8.8px;font-weight:400;color:#2a2a32;">$0.00</div>
<div style="position:absolute;left:404px;top:528.15px;width:1110px;height:1px;background:#f1f1f4;"></div>
<div class="t" style="left:411.5px;top:510.57px;font-size:9.05px;font-weight:400;-webkit-text-stroke:0.32px #523bcc;color:#523bcc;">Martha Stewart +5</div>
<div class="t" style="left:726.5px;top:510.65px;font-size:8.9px;font-weight:400;color:#2a2a32;letter-spacing:0.2px">05/02/2025 (80)</div>
<div class="t" style="left:920.5px;top:510.76px;font-size:8.7px;font-weight:400;color:#2a2a32;letter-spacing:0.12px">Acre Valley</div>
<div class="t" style="left:1068px;top:510.76px;font-size:8.7px;font-weight:400;color:#2a2a32;letter-spacing:0.08px">Atlanta</div>
<div class="t" style="left:1193.5px;top:510.57px;font-size:9.05px;font-weight:400;-webkit-text-stroke:0.32px #523bcc;color:#523bcc;">7777 American Ave</div>
<div class="t" style="left:1426.5px;top:510.71px;font-size:8.8px;font-weight:400;color:#2a2a32;">$0.00</div>
<div style="position:absolute;left:404px;top:553.46px;width:1110px;height:1px;background:#f1f1f4;"></div>
<div class="t" style="left:411.5px;top:535.88px;font-size:9.05px;font-weight:400;-webkit-text-stroke:0.32px #523bcc;color:#523bcc;">Tablur Slides</div>
<div class="t" style="left:726.5px;top:535.97px;font-size:8.9px;font-weight:400;color:#2a2a32;letter-spacing:0.2px">05/03/2025 (81)</div>
<div class="t" style="left:920.5px;top:536.08px;font-size:8.7px;font-weight:400;color:#2a2a32;letter-spacing:0.12px">Acre Valley</div>
<div class="t" style="left:1068px;top:536.08px;font-size:8.7px;font-weight:400;color:#2a2a32;letter-spacing:0.08px">Little Rock</div>
<div class="t" style="left:1193.5px;top:535.88px;font-size:9.05px;font-weight:400;-webkit-text-stroke:0.32px #523bcc;color:#523bcc;">123 Cedar Creek Loop</div>
<div class="t" style="left:1426.5px;top:536.02px;font-size:8.8px;font-weight:400;color:#2a2a32;">$1,862.28</div>
<div style="position:absolute;left:404px;top:578.77px;width:1110px;height:1px;background:#f1f1f4;"></div>
<div class="t" style="left:411.5px;top:561.19px;font-size:9.05px;font-weight:400;-webkit-text-stroke:0.32px #523bcc;color:#523bcc;">Thomas Jefferson +3</div>
<div class="t" style="left:726.5px;top:561.27px;font-size:8.9px;font-weight:400;color:#2a2a32;letter-spacing:0.2px">05/03/2025 (81)</div>
<div class="t" style="left:920.5px;top:561.38px;font-size:8.7px;font-weight:400;color:#2a2a32;letter-spacing:0.12px">Acre Valley</div>
<div class="t" style="left:1068px;top:561.38px;font-size:8.7px;font-weight:400;color:#2a2a32;letter-spacing:0.08px">Oklahoma City</div>
<div class="t" style="left:1193.5px;top:561.19px;font-size:9.05px;font-weight:400;-webkit-text-stroke:0.32px #523bcc;color:#523bcc;">3455 SW 4th St</div>
<div class="t" style="left:1426.5px;top:561.33px;font-size:8.8px;font-weight:400;color:#2a2a32;">$0.00</div>
<div style="position:absolute;left:404px;top:604.08px;width:1110px;height:1px;background:#f1f1f4;"></div>
<div class="t" style="left:411.5px;top:586.50px;font-size:9.05px;font-weight:400;-webkit-text-stroke:0.32px #523bcc;color:#523bcc;">Nicole Smith</div>
<div class="t" style="left:726.5px;top:586.59px;font-size:8.9px;font-weight:400;color:#2a2a32;letter-spacing:0.2px">05/03/2025 (81)</div>
<div class="t" style="left:920.5px;top:586.70px;font-size:8.7px;font-weight:400;color:#2a2a32;letter-spacing:0.12px">Acre Valley</div>
<div class="t" style="left:1068px;top:586.70px;font-size:8.7px;font-weight:400;color:#2a2a32;letter-spacing:0.08px">Little Rock</div>
<div class="t" style="left:1193.5px;top:586.50px;font-size:9.05px;font-weight:400;-webkit-text-stroke:0.32px #523bcc;color:#523bcc;">555 Eastwood Creek Dr</div>
<div class="t" style="left:1426.5px;top:586.64px;font-size:8.8px;font-weight:400;color:#2a2a32;">$0.00</div>
<div style="position:absolute;left:404px;top:629.39px;width:1110px;height:1px;background:#f1f1f4;"></div>
<div class="t" style="left:411.5px;top:611.81px;font-size:9.05px;font-weight:400;-webkit-text-stroke:0.32px #523bcc;color:#523bcc;">Elisa Johnson</div>
<div class="t" style="left:726.5px;top:611.89px;font-size:8.9px;font-weight:400;color:#2a2a32;letter-spacing:0.2px">05/03/2025 (81)</div>
<div class="t" style="left:920.5px;top:612.00px;font-size:8.7px;font-weight:400;color:#2a2a32;letter-spacing:0.12px">Acre Valley</div>
<div class="t" style="left:1068px;top:612.00px;font-size:8.7px;font-weight:400;color:#2a2a32;letter-spacing:0.08px">Oklahoma City</div>
<div class="t" style="left:1193.5px;top:611.81px;font-size:9.05px;font-weight:400;-webkit-text-stroke:0.32px #523bcc;color:#523bcc;">123 Brooke Rd</div>
<div class="t" style="left:1426.5px;top:611.95px;font-size:8.8px;font-weight:400;color:#2a2a32;">$0.00</div>
<div style="position:absolute;left:404px;top:654.7px;width:1110px;height:1px;background:#f1f1f4;"></div>
<div class="t" style="left:411.5px;top:637.12px;font-size:9.05px;font-weight:400;-webkit-text-stroke:0.32px #523bcc;color:#523bcc;">Sammie Davis Jr. +9</div>
<div class="t" style="left:726.5px;top:637.21px;font-size:8.9px;font-weight:400;color:#2a2a32;letter-spacing:0.2px">05/03/2025 (81)</div>
<div class="t" style="left:920.5px;top:637.32px;font-size:8.7px;font-weight:400;color:#2a2a32;letter-spacing:0.12px">Acre Valley</div>
<div class="t" style="left:1068px;top:637.32px;font-size:8.7px;font-weight:400;color:#2a2a32;letter-spacing:0.08px">Huntsville</div>
<div class="t" style="left:1193.5px;top:637.12px;font-size:9.05px;font-weight:400;-webkit-text-stroke:0.32px #523bcc;color:#523bcc;">222 McKenna Dr</div>
<div class="t" style="left:1426.5px;top:637.26px;font-size:8.8px;font-weight:400;color:#2a2a32;">$346.38</div>
<div style="position:absolute;left:404px;top:680.01px;width:1110px;height:1px;background:#f1f1f4;"></div>
<div class="t" style="left:411.5px;top:662.43px;font-size:9.05px;font-weight:400;-webkit-text-stroke:0.32px #523bcc;color:#523bcc;">Tommy Astros</div>
<div class="t" style="left:726.5px;top:662.51px;font-size:8.9px;font-weight:400;color:#2a2a32;letter-spacing:0.2px">05/05/2025 (83)</div>
<div class="t" style="left:920.5px;top:662.62px;font-size:8.7px;font-weight:400;color:#2a2a32;letter-spacing:0.12px">Pine Grove</div>
<div class="t" style="left:1068px;top:662.62px;font-size:8.7px;font-weight:400;color:#2a2a32;letter-spacing:0.08px">Oklahoma City</div>
<div class="t" style="left:1193.5px;top:662.43px;font-size:9.05px;font-weight:400;-webkit-text-stroke:0.32px #523bcc;color:#523bcc;">123 Bradford Way</div>
<div class="t" style="left:1426.5px;top:662.57px;font-size:8.8px;font-weight:400;color:#2a2a32;">$317.79</div>
<div style="position:absolute;left:404px;top:705.32px;width:1110px;height:1px;background:#f1f1f4;"></div>
<div class="t" style="left:411.5px;top:687.74px;font-size:9.05px;font-weight:400;-webkit-text-stroke:0.32px #523bcc;color:#523bcc;">Betty Thomson +3</div>
<div class="t" style="left:726.5px;top:687.83px;font-size:8.9px;font-weight:400;color:#2a2a32;letter-spacing:0.2px">05/05/2025 (83)</div>
<div class="t" style="left:920.5px;top:687.94px;font-size:8.7px;font-weight:400;color:#2a2a32;letter-spacing:0.12px">Acre Valley</div>
<div class="t" style="left:1068px;top:687.94px;font-size:8.7px;font-weight:400;color:#2a2a32;letter-spacing:0.08px">Triad</div>
<div class="t" style="left:1193.5px;top:687.74px;font-size:9.05px;font-weight:400;-webkit-text-stroke:0.32px #523bcc;color:#523bcc;">321 Byers Rd</div>
<div class="t" style="left:1426.5px;top:687.88px;font-size:8.8px;font-weight:400;color:#2a2a32;">$0.00</div>
<div style="position:absolute;left:404px;top:730.63px;width:1110px;height:1px;background:#f1f1f4;"></div>
<div class="t" style="left:411.5px;top:713.05px;font-size:9.05px;font-weight:400;-webkit-text-stroke:0.32px #523bcc;color:#523bcc;">Cassy McCassy +6</div>
<div class="t" style="left:726.5px;top:713.13px;font-size:8.9px;font-weight:400;color:#2a2a32;letter-spacing:0.2px">05/05/2025 (83)</div>
<div class="t" style="left:920.5px;top:713.25px;font-size:8.7px;font-weight:400;color:#2a2a32;letter-spacing:0.12px">Acre Valley</div>
<div class="t" style="left:1068px;top:713.25px;font-size:8.7px;font-weight:400;color:#2a2a32;letter-spacing:0.08px">Tulsa</div>
<div class="t" style="left:1193.5px;top:713.05px;font-size:9.05px;font-weight:400;-webkit-text-stroke:0.32px #523bcc;color:#523bcc;">933 E 109th Pl S</div>
<div class="t" style="left:1426.5px;top:713.19px;font-size:8.8px;font-weight:400;color:#2a2a32;">$102.94</div>
<div style="position:absolute;left:404px;top:755.9399999999999px;width:1110px;height:1px;background:#f1f1f4;"></div>
<div class="t" style="left:411.5px;top:738.36px;font-size:9.05px;font-weight:400;-webkit-text-stroke:0.32px #523bcc;color:#523bcc;">Erica McDugal</div>
<div class="t" style="left:726.5px;top:738.44px;font-size:8.9px;font-weight:400;color:#2a2a32;letter-spacing:0.2px">05/06/2025 (84)</div>
<div class="t" style="left:920.5px;top:738.55px;font-size:8.7px;font-weight:400;color:#2a2a32;letter-spacing:0.12px">Acre Valley</div>
<div class="t" style="left:1068px;top:738.55px;font-size:8.7px;font-weight:400;color:#2a2a32;letter-spacing:0.08px">Memphis</div>
<div class="t" style="left:1193.5px;top:738.36px;font-size:9.05px;font-weight:400;-webkit-text-stroke:0.32px #523bcc;color:#523bcc;">800 Beretta Rd</div>
<div class="t" style="left:1426.5px;top:738.50px;font-size:8.8px;font-weight:400;color:#2a2a32;">$0.00</div>
<div style="position:absolute;left:404px;top:781.25px;width:1110px;height:1px;background:#f1f1f4;"></div>
<div class="t" style="left:411.5px;top:763.67px;font-size:9.05px;font-weight:400;-webkit-text-stroke:0.32px #523bcc;color:#523bcc;">Krist O'maly +1</div>
<div class="t" style="left:726.5px;top:763.75px;font-size:8.9px;font-weight:400;color:#2a2a32;letter-spacing:0.2px">05/06/2025 (84)</div>
<div class="t" style="left:920.5px;top:763.87px;font-size:8.7px;font-weight:400;color:#2a2a32;letter-spacing:0.12px">Acre Valley</div>
<div class="t" style="left:1068px;top:763.87px;font-size:8.7px;font-weight:400;color:#2a2a32;letter-spacing:0.08px">Houston</div>
<div class="t" style="left:1193.5px;top:763.67px;font-size:9.05px;font-weight:400;-webkit-text-stroke:0.32px #523bcc;color:#523bcc;">300 Gln Brk Ln</div>
<div class="t" style="left:1426.5px;top:763.81px;font-size:8.8px;font-weight:400;color:#2a2a32;">$0.00</div>
<div style="position:absolute;left:404px;top:806.5600000000001px;width:1110px;height:1px;background:#f1f1f4;"></div>
<div class="t" style="left:411.5px;top:788.98px;font-size:9.05px;font-weight:400;-webkit-text-stroke:0.32px #523bcc;color:#523bcc;">Becky Krysitals +2</div>
<div class="t" style="left:726.5px;top:789.07px;font-size:8.9px;font-weight:400;color:#2a2a32;letter-spacing:0.2px">05/07/2025 (85)</div>
<div class="t" style="left:920.5px;top:789.18px;font-size:8.7px;font-weight:400;color:#2a2a32;letter-spacing:0.12px">Acre Valley</div>
<div class="t" style="left:1068px;top:789.18px;font-size:8.7px;font-weight:400;color:#2a2a32;letter-spacing:0.08px">Tulsa</div>
<div class="t" style="left:1193.5px;top:788.98px;font-size:9.05px;font-weight:400;-webkit-text-stroke:0.32px #523bcc;color:#523bcc;">400 N 128th E Ave</div>
<div class="t" style="left:1426.5px;top:789.12px;font-size:8.8px;font-weight:400;color:#2a2a32;">$0.00</div>
<div style="position:absolute;left:404px;top:831.87px;width:1110px;height:1px;background:#f1f1f4;"></div>
<div class="t" style="left:411.5px;top:814.29px;font-size:9.05px;font-weight:400;-webkit-text-stroke:0.32px #523bcc;color:#523bcc;">Muhammad Ali +3</div>
<div class="t" style="left:726.5px;top:814.38px;font-size:8.9px;font-weight:400;color:#2a2a32;letter-spacing:0.2px">05/07/2025 (85)</div>
<div class="t" style="left:920.5px;top:814.49px;font-size:8.7px;font-weight:400;color:#2a2a32;letter-spacing:0.12px">Acre Valley</div>
<div class="t" style="left:1068px;top:814.49px;font-size:8.7px;font-weight:400;color:#2a2a32;letter-spacing:0.08px">Atlanta</div>
<div class="t" style="left:1193.5px;top:814.29px;font-size:9.05px;font-weight:400;-webkit-text-stroke:0.32px #523bcc;color:#523bcc;">300 Village Green Drive</div>
<div class="t" style="left:1426.5px;top:814.43px;font-size:8.8px;font-weight:400;color:#2a2a32;">$0.00</div>
<div style="position:absolute;left:404px;top:857.18px;width:1110px;height:1px;background:#f1f1f4;"></div>
<div class="t" style="left:411.5px;top:839.60px;font-size:9.05px;font-weight:400;-webkit-text-stroke:0.32px #523bcc;color:#523bcc;">Allen Alien</div>
<div class="t" style="left:726.5px;top:839.68px;font-size:8.9px;font-weight:400;color:#2a2a32;letter-spacing:0.2px">05/08/2025 (86)</div>
<div class="t" style="left:920.5px;top:839.79px;font-size:8.7px;font-weight:400;color:#2a2a32;letter-spacing:0.12px">Pine Grove</div>
<div class="t" style="left:1068px;top:839.79px;font-size:8.7px;font-weight:400;color:#2a2a32;letter-spacing:0.08px">Oklahoma City</div>
<div class="t" style="left:1193.5px;top:839.60px;font-size:9.05px;font-weight:400;-webkit-text-stroke:0.32px #523bcc;color:#523bcc;">444 SW 22nd St</div>
<div class="t" style="left:1426.5px;top:839.74px;font-size:8.8px;font-weight:400;color:#2a2a32;">$0.00</div>
</body></html>
